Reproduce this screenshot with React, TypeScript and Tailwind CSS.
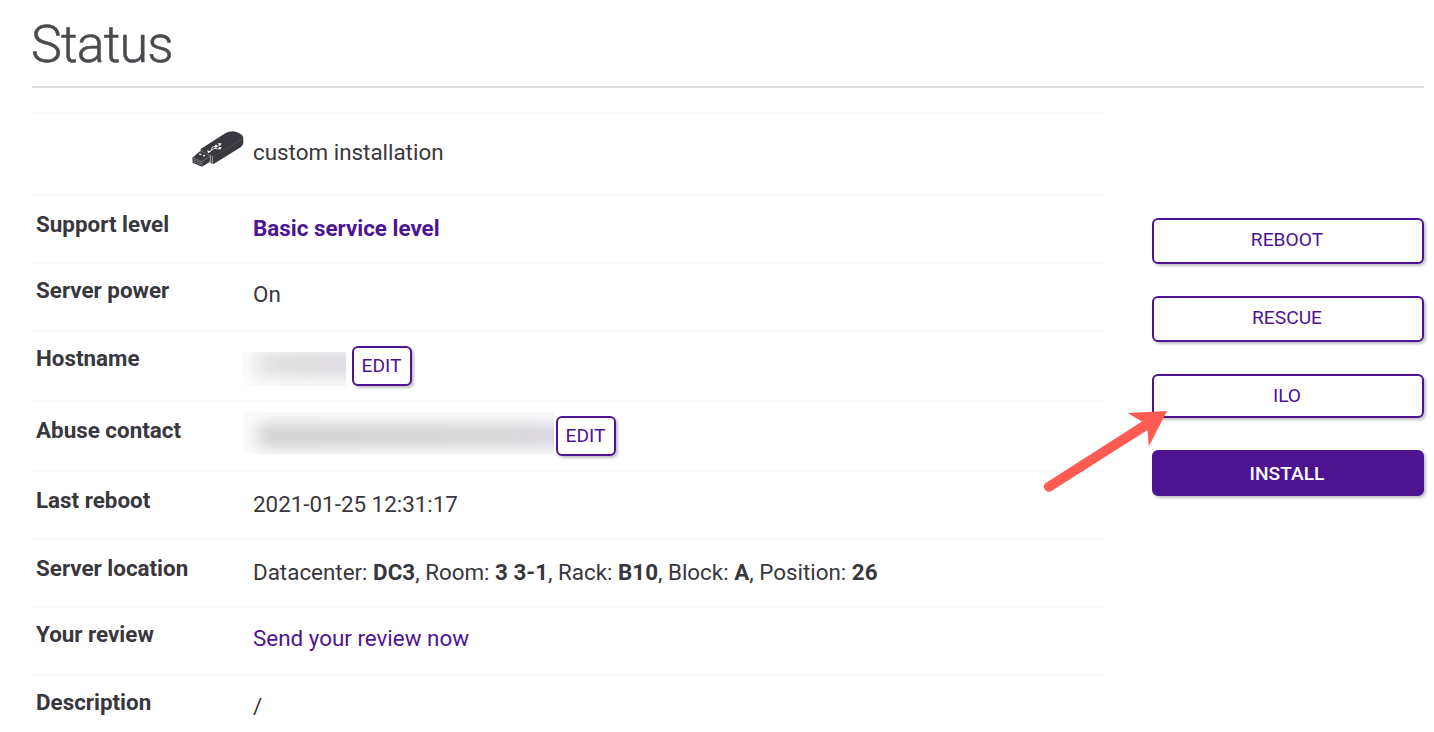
import type { ReactNode } from "react";

function UsbStick() {
  return (
    <svg className="block h-[38px] w-[54px]" viewBox="0 0 162 114" fill="none">
      <path
        d="M29 60 104 12Q120 3 137 9L152 17Q157 21 157 29V43Q156 50 150 54L68 105 57 102V97L31 87Z"
        fill="#3a393f"
      />
      <path d="M4 86 28 66 56 78V99L33 113 5 101Z" fill="#3a393f" />
      <path d="M65 84 155 30" stroke="#68676c" strokeWidth="1.2" />
      <path d="M6 87 33 98 56 82M33 98V111" stroke="#b8b8bb" strokeWidth="1.4" />
      <path d="M9 93 29 101V106L9 98Z" stroke="#aaa" strokeWidth="1.3" />
      <path d="M29 66 63 81" stroke="#a4a4a8" strokeWidth="1.4" />
      <path d="M64 82V104M58 80V102" stroke="#e6e6e8" strokeWidth="2" />
      <path d="M25 75 31 77M36 79 42 81" stroke="#f4f4f4" strokeWidth="4" />
      <path
        d="M54 69 87 47M61 64 64 54 73 52M71 58 82 60 88 57"
        stroke="#fff"
        strokeWidth="2.4"
      />
      <path d="M48 64 60 67 52 73ZM80 43 92 43 87 51Z" fill="#fff" />
      <circle cx="75" cy="51" r="3.4" fill="#fff" />
      <path d="M84 54 92 55 89 61 82 60Z" fill="#fff" />
    </svg>
  );
}

function EditButton() {
  return (
    <button className="flex h-10 w-[60px] items-center justify-center rounded-[6px] border-2 border-[#4d1492] bg-white pr-px pb-px text-[19.2px] leading-none text-[#4d1492] shadow-[2px_2px_3px_rgba(0,0,0,0.25)]">
      EDIT
    </button>
  );
}

type Row = { label: string; size: string; content: ReactNode };

const rows: Row[] = [
  {
    label: "Support level",
    size: "h-[68px] pt-3",
    content: (
      <a className="pt-1 font-bold text-[#4d1492]">Basic service level</a>
    ),
  },
  {
    label: "Server power",
    size: "h-[68px] pt-[10px]",
    content: <span className="pt-1">On</span>,
  },
  {
    label: "Hostname",
    size: "h-[70px] pt-[10px]",
    content: (
      <div className="-ml-[11px] flex items-start gap-[6px] pt-1">
        <div className="mt-[6px] h-[34px] w-[104px] overflow-hidden bg-[#fdfdfd] pt-px pl-[14px]">
          <div className="h-[22px] w-[120px] bg-gradient-to-r from-[#dadada] via-[#d2d2d2] via-40% to-[#d8cfe3] blur-[10px]" />
        </div>
        <EditButton />
      </div>
    ),
  },
  {
    label: "Abuse contact",
    size: "h-[70px] pt-3",
    content: (
      <div className="-ml-[9px] flex items-start gap-[2px] pt-[2px]">
        <div className="-mt-1 h-[42px] w-[310px] overflow-hidden bg-[#fcfcfc] pt-[13px] pl-[14px]">
          <div className="h-[21px] w-[330px] bg-gradient-to-r from-[#c8c8c8] via-[#cecece] via-75% to-[#d6cbe4] blur-[9px]" />
        </div>
        <EditButton />
      </div>
    ),
  },
  {
    label: "Last reboot",
    size: "h-[68px] pt-3",
    content: <span className="pt-1">2021-01-25 12:31:17</span>,
  },
  {
    label: "Server location",
    size: "h-[68px] pt-3",
    content: (
      <span className="pt-1">
        Datacenter: <b>DC3</b>, Room: <b>3 3-1</b>, Rack: <b>B10</b>, Block:{" "}
        <b>A</b>, Position: <b>26</b>
      </span>
    ),
  },
  {
    label: "Your review",
    size: "h-[68px] pt-[10px]",
    content: <a className="pt-1 text-[#4d1492]">Send your review now</a>,
  },
  {
    label: "Description",
    size: "h-[58px] pt-[10px]",
    content: <span className="pt-1">/</span>,
  },
];

const actions = [
  { label: "REBOOT", style: "h-[46px] pb-[3px] mb-8 bg-white text-[#4d1492]" },
  { label: "RESCUE", style: "h-[46px] pb-[3px] mb-8 bg-white text-[#4d1492]" },
  { label: "ILO", style: "h-[44px] pb-px mb-8 bg-white text-[#4d1492]" },
  {
    label: "INSTALL",
    style: "h-[46px] pt-px bg-[#4d1492] text-white font-medium",
  },
];

export default function App() {
  return (
    <main className="relative h-[732px] w-[1434px] overflow-hidden bg-white pr-[10px] pl-8 font-[Roboto,sans-serif] text-[22.4px] leading-8 text-[#38373d]">
      <h1 className="h-[88px] border-b-2 border-[#dcdcdc] pt-[15px] text-[52px] leading-[60px] font-light tracking-[-0.9px] text-[#4a494e] [-webkit-text-stroke:0.5px_#4a494e]">
        <span className="-ml-px">Status</span>
      </h1>
      <div className="flex gap-12 pt-6">
        <section className="w-[1072px]">
          <div className="flex h-[82px] items-start border-t-2 border-[#f9f9f9] pl-[159px]">
            <div className="pt-[15px]">
              <UsbStick />
            </div>
            <span className="pt-[22px] pl-2">custom installation</span>
          </div>
          {rows.map((row) => (
            <div
              key={row.label}
              className={`flex items-start border-t-2 border-[#f9f9f9] pl-1 ${row.size}`}
            >
              <div className="w-[217px] shrink-0 font-bold">{row.label}</div>
              {row.content}
            </div>
          ))}
        </section>
        <aside className="flex w-[272px] flex-col pt-[106px]">
          {actions.map((action) => (
            <button
              key={action.label}
              className={`flex w-full shrink-0 items-center justify-center rounded-[6px] border-2 border-[#4d1492] pr-[2px] text-[19.2px] leading-none shadow-[2px_2px_3px_rgba(0,0,0,0.25)] ${action.style}`}
            >
              {action.label}
            </button>
          ))}
        </aside>
      </div>
      <svg
        className="absolute top-[405px] left-[1040px] h-[90px] w-[130px]"
        viewBox="1040 405 130 90"
      >
        <path
          d="M1167 411 1127.500 413 1142 421.500 1045.800 483A4.900 4.900 0 0 0 1051.400 491L1147.500 430 1148.800 446.500Z"
          fill="#ff5b53"
        />
      </svg>
    </main>
  );
}
